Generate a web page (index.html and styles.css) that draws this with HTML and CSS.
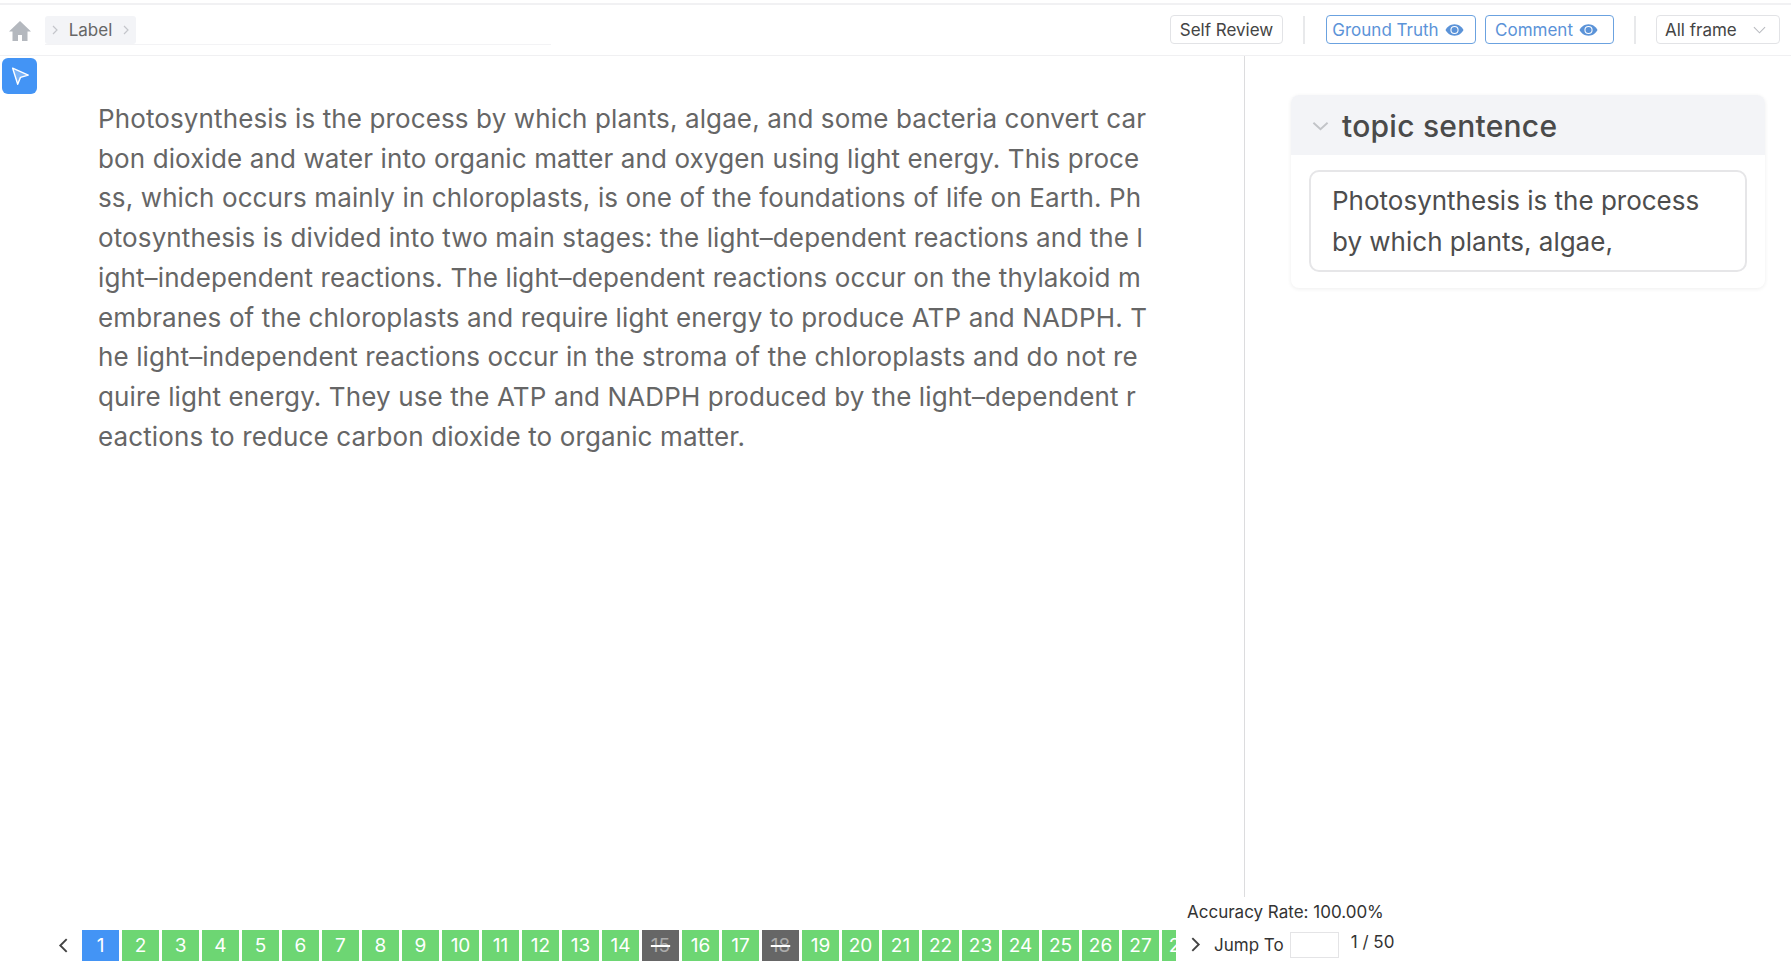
FILE: index.html
```html
<!DOCTYPE html>
<html lang="en">
<head>
<meta charset="utf-8">
<title>Label</title>
<link rel="stylesheet" href="styles.css">
</head>
<body>
<div class="app">
  <header class="topbar">
    <div class="crumbs">
      <svg class="home" viewBox="0 0 24 24"><path d="M12 2 1 12.500h3.500V22H10v-6h4v6h5.500v-9.500H23z"/></svg>
      <div class="trail">
        <div class="crumb">
          <svg class="sep" viewBox="0 0 8 12"><path d="M2 2l4 4-4 4"/></svg>
          <span>Label</span>
          <svg class="sep" viewBox="0 0 8 12"><path d="M2 2l4 4-4 4"/></svg>
        </div>
      </div>
    </div>
    <div class="actions">
      <button class="btn">Self Review</button>
      <i class="vline first"></i>
      <button class="btn btn-blue gt">Ground Truth <svg class="eye" viewBox="0 0 20 14"><path d="M10 1C5.500 1 2 4 .5 7 2 10 5.500 13 10 13s8-3 9.500-6C18 4 14.500 1 10 1z"/><circle cx="10" cy="7" r="4.300" class="eye-ring"/><circle cx="10" cy="7" r="3.200"/></svg></button>
      <button class="btn btn-blue cm">Comment <svg class="eye" viewBox="0 0 20 14"><path d="M10 1C5.500 1 2 4 .5 7 2 10 5.500 13 10 13s8-3 9.500-6C18 4 14.500 1 10 1z"/><circle cx="10" cy="7" r="4.300" class="eye-ring"/><circle cx="10" cy="7" r="3.200"/></svg></button>
      <i class="vline"></i>
      <button class="btn select">All frame <svg class="chev" viewBox="0 0 14 8"><path d="M1 1l6 6 6-6"/></svg></button>
    </div>
  </header>
  <main class="main">
    <div class="rail">
      <div class="tool">
        <svg viewBox="0 0 24 24"><path d="M4 3.500 21 11l-8.500 2.500L9.500 21z"/></svg>
      </div>
    </div>
    <article class="doc">
      <span class="ln">Photosynthesis is the process by which plants, algae, and some bacteria convert car</span>
      <span class="ln">bon dioxide and water into organic matter and oxygen using light energy. This proce</span>
      <span class="ln">ss, which occurs mainly in chloroplasts, is one of the foundations of life on Earth. Ph</span>
      <span class="ln">otosynthesis is divided into two main stages: the light–dependent reactions and the l</span>
      <span class="ln">ight–independent reactions. The light–dependent reactions occur on the thylakoid m</span>
      <span class="ln">embranes of the chloroplasts and require light energy to produce ATP and NADPH. T</span>
      <span class="ln">he light–independent reactions occur in the stroma of the chloroplasts and do not re</span>
      <span class="ln">quire light energy. They use the ATP and NADPH produced by the light–dependent r</span>
      <span class="ln">eactions to reduce carbon dioxide to organic matter.</span>
    </article>
    <aside class="side">
      <section class="card">
        <div class="card-head">
          <svg class="card-chev" viewBox="0 0 18 10"><path d="M1.500 1.500 9 8.500l7.500-7"/></svg>
          <span>topic sentence</span>
        </div>
        <div class="card-body">
          <div class="answer">Photosynthesis is the process by which plants, algae,</div>
        </div>
      </section>
    </aside>
  </main>
  <footer class="footer">
    <svg class="arrow prev" viewBox="0 0 10 16"><path d="M8 2 2 8l6 6"/></svg>
    <div class="pages">
      <span class="pg cur">1</span><span class="pg">2</span><span class="pg">3</span><span class="pg">4</span><span class="pg">5</span><span class="pg">6</span><span class="pg">7</span><span class="pg">8</span><span class="pg">9</span><span class="pg">10</span><span class="pg">11</span><span class="pg">12</span><span class="pg">13</span><span class="pg">14</span><span class="pg off">15</span><span class="pg">16</span><span class="pg">17</span><span class="pg off">18</span><span class="pg">19</span><span class="pg">20</span><span class="pg">21</span><span class="pg">22</span><span class="pg">23</span><span class="pg">24</span><span class="pg">25</span><span class="pg">26</span><span class="pg">27</span><span class="pg">28</span>
    </div>
    <div class="pager-right">
      <div class="accuracy">Accuracy Rate: 100.00%</div>
      <div class="jump">
        <svg class="arrow" viewBox="0 0 10 16"><path d="M2 2l6 6-6 6"/></svg>
        <span class="jump-label">Jump To</span>
        <input class="jump-input" type="text" aria-label="Jump to page">
        <span class="count">1 / 50</span>
      </div>
    </div>
  </footer>
</div>
</body>
</html>
```
FILE: styles.css
```css
* { box-sizing: border-box; }
html, body { margin: 0; padding: 0; background: #fff; }
body { font-family: Inter, "Noto Sans", sans-serif; color: #444; overflow: hidden; }
.app { width: 1791px; height: 969px; display: flex; flex-direction: column; padding-top: 3px; }

.topbar { height: 53px; flex: none; display: flex; justify-content: space-between; align-items: flex-start; padding-top: 10px; border-top: 2px solid #f1f1f3; border-bottom: 1px solid #f0f0f2; }
.crumbs { display: flex; align-items: center; padding-left: 8px; margin-top: 1px; }
.home { width: 24px; height: 24px; fill: #b4b8be; margin-right: 13px; margin-top: 1px; }
.trail { width: 506px; height: 29px; border-bottom: 1px solid #f3f3f5; }
.crumb { width: 91px; height: 28px; background: #f3f4f7; border-radius: 3px; display: flex; align-items: center; justify-content: space-between; padding: 0 6px 0 6px; font-size: 17px; color: #666; }
.sep { width: 8px; height: 12px; fill: none; stroke: #c4c6cb; stroke-width: 1.200; }

.actions { display: flex; align-items: center; padding-right: 11px; }
.btn { height: 29px; padding: 0; font: 400 17px Inter, sans-serif; color: #444; background: #fff; border: 1px solid #e2e3e6; border-radius: 4px; display: flex; align-items: center; justify-content: center; gap: 6px; width: 113px; }
.btn-blue { color: #5b93d8; border: 1.500px solid #6ba2e0; padding-right: 6px; }
.gt { width: 150px; }
.cm { width: 129px; margin-left: 9px; }
.select { width: 124px; justify-content: space-between; padding: 0 13px 0 8px; }
.vline { width: 2px; height: 28px; background: #e8e9eb; margin: 0 20px; }
.first { margin-right: 21px; }
.eye { width: 19px; height: 14px; fill: #5b93d8; }
.eye-ring { fill: #fff; }
.eye circle:last-child { fill: #5b93d8; }
.chev { width: 13px; height: 8px; fill: none; stroke: #b9bbc0; stroke-width: 1.200; }

.main { flex: 1; min-height: 0; display: flex; }
.rail { width: 38px; flex: none; padding: 2px 0 0 2px; }
.tool { width: 35px; height: 36px; background: #4394f5; border-radius: 6px; display: flex; align-items: center; justify-content: center; }
.tool svg { width: 22px; height: 22px; fill: rgba(255,255,255,.3); stroke: #fff; stroke-width: 1.500; stroke-linejoin: round; }
.doc { width: 1207px; flex: none; border-right: 1px solid #dcdcde; padding: 43px 0 0 60px; font-size: 26px; letter-spacing: .12px; line-height: 39.7px; color: #666; }
.ln { display: block; white-space: nowrap; }
.side { flex: 1; padding: 39px 26px 0 46px; }
.card { height: 193px; border-radius: 8px; box-shadow: 0 1px 4px rgba(0,0,0,.07); background: #fff; }
.card-head { height: 60px; background: #f3f4f7; border-radius: 8px 8px 0 0; display: flex; align-items: center; padding: 2px 0 0 21px; font-size: 30px; font-weight: 500; letter-spacing: .25px; color: #4a4a4a; gap: 13px; }
.card-chev { width: 17px; height: 10px; fill: none; stroke: #c2c4c8; stroke-width: 2; }
.card-body { padding: 15px 18px 0; }
.answer { height: 102px; border: 2px solid #e6e6e8; border-radius: 10px; padding: 8px 21px; font-size: 26px; line-height: 41px; color: #4d4d4d; }

.footer { height: 72px; flex: none; display: flex; align-items: flex-end; padding: 0 0 8px 57px; }
.arrow { width: 13px; height: 17px; fill: none; stroke: #444; stroke-width: 1.800; flex: none; }
.prev { margin-bottom: 7px; margin-right: 12px; }
.pages { width: 1094px; flex: none; display: flex; gap: 3px; overflow: hidden; }
.pg { width: 37px; height: 31px; flex: none; background: #6dd673; color: #fff; font-size: 19px; display: flex; align-items: center; justify-content: center; }
.cur { background: #4394f5; }
.off { background: #666; color: #aaa; text-decoration: line-through; text-decoration-color: #fff; text-decoration-thickness: 2px; }
.pager-right { width: 250px; display: flex; flex-direction: column; padding-left: 11px; margin-bottom: 3px; }
.accuracy { font-size: 17px; color: #333; margin-bottom: 9px; white-space: nowrap; }
.jump { display: flex; align-items: center; height: 27px; padding-left: 2px; font-size: 17px; color: #333; }
.jump-label { margin-left: 12px; white-space: nowrap; }
.jump-input { width: 49px; height: 26px; margin-left: 6px; border: 1px solid #e4e4e6; background: #fff; padding: 0; }
.count { margin: 0 0 5px 12px; white-space: nowrap; }
```
